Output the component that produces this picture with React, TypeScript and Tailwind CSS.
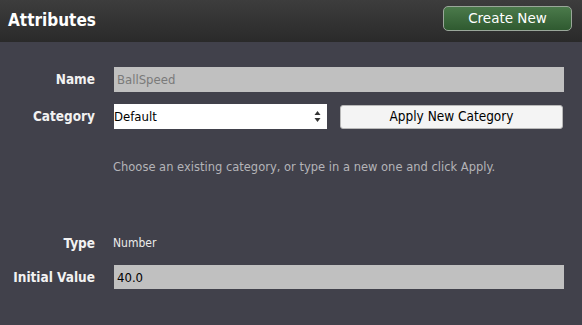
import React from "react";

const font = { fontFamily: '"DejaVu Sans Condensed", "DejaVu Sans", Verdana, sans-serif' };
const wide = { fontFamily: '"DejaVu Sans", Verdana, sans-serif' };

const Label: React.FC<{ children: React.ReactNode }> = ({ children }) => (
  <div className="w-[95px] shrink-0 text-right text-[13.5px] font-bold text-[#f2f2f2]">{children}</div>
);

export default function App() {
  return (
    <div className="w-[582px] h-[325px] bg-[#41414b] overflow-hidden" style={font}>
      {/* Header */}
      <div className="h-[42px] flex items-start justify-between bg-gradient-to-b from-[#3d3d3d] to-[#2a2a2a]">
        <div className="pl-[8px] pt-[9px] text-[17px] font-bold text-white leading-[22px]">Attributes</div>
        <button
          type="button"
          className="mt-[6px] mr-[10px] w-[129px] h-[25px] rounded-[5px] border border-[#9aa79a] bg-gradient-to-b from-[#4b7a4b] to-[#2f5a30] text-[13.5px] text-white leading-none"
          style={wide}
        >
          Create New
        </button>
      </div>

      {/* Form */}
      <div className="pt-[25px] flex flex-col">
        <div className="flex items-center gap-[19px] h-[25px]">
          <Label>Name</Label>
          <div className="w-[450px] h-[25px] bg-[#c0c0c0] text-[13px] text-[#7a7a7a] px-[3px] flex items-center">BallSpeed</div>
        </div>

        <div className="flex items-center gap-[19px] h-[25px] mt-[12px]">
          <Label>Category</Label>
          <div className="w-[213px] h-[25px] bg-white text-[13px] text-black flex items-center justify-between pr-[6px]">
            <span>Default</span>
            <svg width="7" height="13" viewBox="0 0 7 13">
              <path d="M3.5 1 L6.5 5 L0.5 5 Z" fill="#333" />
              <path d="M3.5 12 L6.5 8 L0.5 8 Z" fill="#333" />
            </svg>
          </div>
          <button
            type="button"
            className="ml-[-6px] w-[223px] h-[24px] rounded-[3px] border border-[#b8b8b8] bg-[#f4f4f4] text-[13.5px] text-black leading-none"
          >
            Apply New Category
          </button>
        </div>

        <div className="ml-[113px] mt-[30px] text-[11.5px] text-[#b4b4b8]" style={wide}>
          Choose an existing category, or type in a new one and click Apply.
        </div>

        <div className="flex items-center gap-[18px] mt-[58px] h-[18px]">
          <Label>Type</Label>
          <div className="text-[12px] text-[#ececec]">Number</div>
        </div>

        <div className="flex items-center gap-[19px] h-[24px] mt-[13px]">
          <Label>Initial Value</Label>
          <div className="w-[450px] h-[24px] bg-[#c0c0c0] text-[13px] text-black px-[3px] flex items-center">40.0</div>
        </div>
      </div>
    </div>
  );
}
